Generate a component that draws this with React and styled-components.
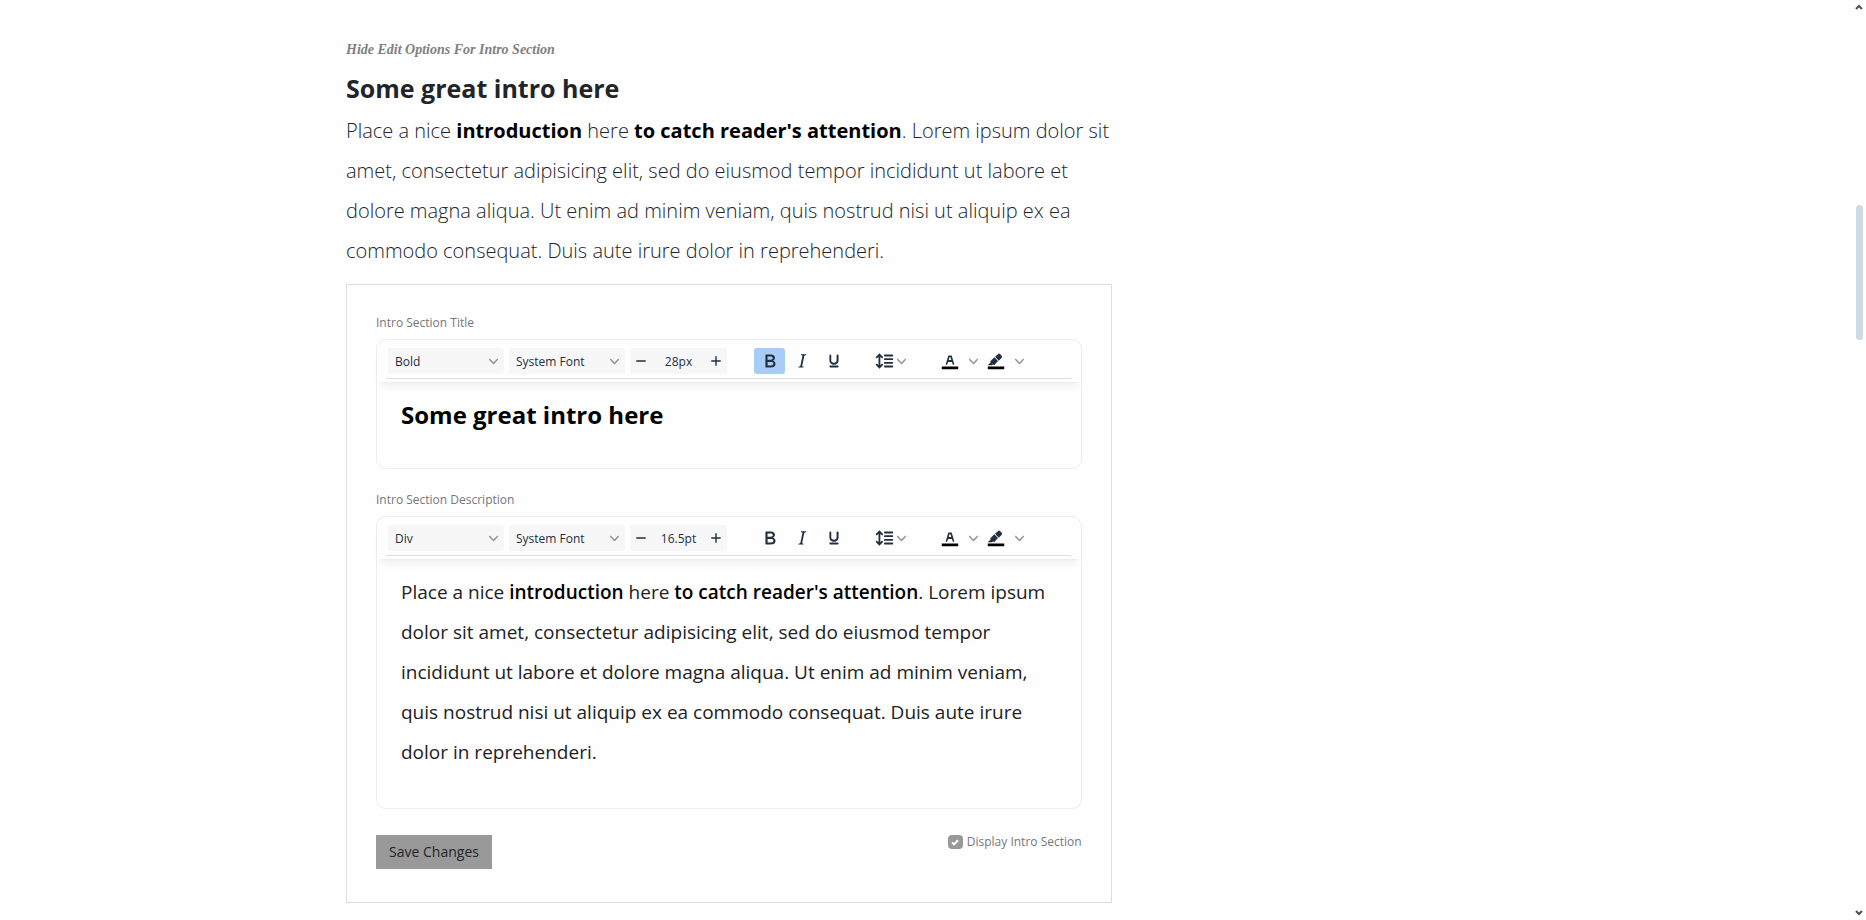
import React, { useState } from "react";
import styled, { createGlobalStyle, css } from "styled-components";

const GlobalStyle = createGlobalStyle`
  *, *::before, *::after { box-sizing: border-box; }
  body {
    margin: 0;
    background: #fefefe;
    color: #212529;
    font-family: "Open Sans", sans-serif;
  }
`;

const Shell = styled.div`
  display: flex;
  min-height: 100vh;
`;

const Page = styled.main`
  flex: 1;
  min-width: 0;
`;

const Container = styled.div`
  max-width: 1160px;
  margin: 0 auto;
`;

const Column = styled.section`
  width: 66%;
  padding: 39px 0 16px;
`;

const ToggleLink = styled.a`
  display: block;
  color: #808080;
  font: italic bold 14px/22px "Liberation Serif", serif;
  text-decoration: none;
`;

const Heading = styled.h2`
  margin: 10px 0 6px;
  font-size: 25px;
  font-weight: 700;
  line-height: 34px;
`;

const Intro = styled.p`
  margin: 0 0 13px;
  color: #212529;
  font-size: 20px;
  font-weight: 300;
  line-height: 40px;

  strong { color: #000; font-weight: 700; }
`;

const Panel = styled.form`
  padding: 29px 29px 33px;
  border: 1px solid #dddddd;
`;

const FieldLabel = styled.div`
  margin-bottom: 7px;
  color: #777777;
  font-size: 12px;
  line-height: 18px;
`;

const Editor = styled.div`
  margin-bottom: 22px;
  border: 1px solid #eeeeee;
  border-radius: 10px;
`;

const EditorHeader = styled.div`
  padding: 8px 10px 3px 9px;
  border-radius: 10px 10px 0 0;
  box-shadow: 0 2px 2px -2px rgba(34, 47, 62, 0.1), 0 8px 8px -4px rgba(34, 47, 62, 0.07);
`;

const Toolbar = styled.div`
  display: flex;
  align-items: center;
  padding: 0 0 4px 2px;
  border-bottom: 1px solid #dedede;
`;

const Group = styled.div`
  display: flex;
  align-items: center;
  gap: ${(p) => p.$gap || 0}px;
  margin-right: ${(p) => p.$after || 0}px;
`;

const controlText = css`
  color: #222f3e;
  font-family: "Open Sans", sans-serif;
  font-size: 12px;
`;

const SelectWrap = styled.label`
  display: flex;
  align-items: center;
  width: 116px;
  height: 26px;
  padding-right: 6px;
  border-radius: 3px;
  background: #f7f7f7;
`;

const Select = styled.select`
  ${controlText}
  flex: 1;
  min-width: 0;
  height: 26px;
  padding: 0 0 0 7px;
  border: 0;
  background: transparent;
  appearance: none;
`;

const Stepper = styled.div`
  display: flex;
  width: 97px;
  height: 26px;
  border-radius: 3px;
  background: #f7f7f7;
`;

const SizeInput = styled.input`
  ${controlText}
  flex: 1;
  min-width: 0;
  padding: 0;
  border: 0;
  background: transparent;
  text-align: center;
`;

const ToolButton = styled.button`
  display: flex;
  align-items: center;
  justify-content: center;
  gap: 2px;
  width: ${(p) => (p.$width ? `${p.$width}px` : "auto")};
  height: 26px;
  padding: 0;
  border: 0;
  border-radius: 3px;
  background: ${(p) => (p.$active ? "#a6ccf7" : "transparent")};
  color: #222f3e;
`;

const Chevron = styled.svg`
  flex: none;
  width: 9px;
  height: 9px;
  fill: #8b919a;
`;

const EditorBody = styled.div`
  color: ${(p) => (p.$title ? "#000" : "#222222")};
  outline: none;
  font-size: ${(p) => (p.$title ? 24 : 19)}px;
  font-weight: ${(p) => (p.$title ? 700 : 400)};
  line-height: ${(p) => (p.$title ? 32 : 40)}px;
  padding: ${(p) => (p.$title ? "17px 24px 37px" : "13px 24px 36px")};

  strong { color: #000; font-weight: 600; }
`;

const Footer = styled.div`
  display: flex;
  align-items: flex-start;
  justify-content: space-between;
  padding-top: 4px;
`;

const SaveButton = styled.button`
  min-width: 116px;
  height: 34px;
  padding: 0 11px;
  border: 0;
  background: #999999;
  color: #212529;
  font: 14px/20px "Open Sans", sans-serif;
`;

const CheckLabel = styled.label`
  display: flex;
  align-items: center;
  gap: 4px;
  color: #777777;
  font-size: 12px;
  line-height: 14px;
`;

const CheckBox = styled.span`
  display: grid;
  width: 15px;
  height: 14px;

  > * { grid-area: 1 / 1; }
  svg { pointer-events: none; place-self: center; opacity: ${(p) => (p.$on ? 1 : 0)}; }
`;

const CheckInput = styled.input`
  width: 15px;
  height: 14px;
  margin: 0;
  border-radius: 4px;
  background: #999999;
  appearance: none;
`;

const ScrollRail = styled.div`
  position: sticky;
  top: 0;
  display: flex;
  flex-direction: column;
  align-items: center;
  width: 14px;
  height: 100vh;
  padding: 4px 0;
`;

const RailSpace = styled.div`
  flex: ${(p) => p.$share};
`;

const RailThumb = styled.div`
  flex: 135;
  width: 7px;
  border-radius: 4px;
  background: #cfdbe4;
`;

const PATHS = {
  bold: "M7.8 19c-.3 0-.5 0-.6-.2l-.2-.5V5.7c0-.2 0-.4.2-.5l.6-.2h5c1.5 0 2.7.3 3.5 1 .7.6 1.1 1.4 1.1 2.5a3 3 0 0 1-.6 1.9c-.4.6-1 1-1.6 1.2.4.1.9.3 1.3.6s.8.7 1 1.2c.4.4.5 1 .5 1.6 0 1.3-.4 2.3-1.3 3-.8.7-2.1 1-3.8 1H7.8Zm5-8.3c.6 0 1.2-.1 1.6-.5.4-.3.6-.7.6-1.3 0-1.1-.8-1.7-2.3-1.7H9.3v3.5h3.4Zm.5 6c.7 0 1.3-.1 1.7-.4.4-.4.6-.9.6-1.5s-.2-1-.7-1.4c-.4-.3-1-.4-2-.4H9.4v3.8h4Z",
  italic: "m16.7 4.7-.1.9h-.3c-.6 0-1 0-1.4.3-.3.3-.4.6-.5 1.1l-2.1 9.8v.6c0 .5.4.8 1.4.8h.2l-.2.8H8l.2-.8h.2c1.1 0 1.8-.5 2-1.5l2-9.8.1-.5c0-.6-.4-.8-1.4-.8h-.3l.2-.9h5.8Z",
  underline: "M16 5c.6 0 1 .4 1 1v5.5a4 4 0 0 1-.4 1.8l-1 1.4a5.3 5.3 0 0 1-5.5 1 5 5 0 0 1-1.6-1c-.5-.4-.8-.9-1.1-1.4a4 4 0 0 1-.4-1.8V6c0-.6.4-1 1-1s1 .4 1 1v5.5c0 .3 0 .6.2 1l.6.7a3.3 3.3 0 0 0 2.2.8 3.4 3.4 0 0 0 2.2-.8c.3-.2.4-.5.4-.8l.2-.9V6c0-.6.4-1 1-1ZM8 17h8c.6 0 1 .4 1 1s-.4 1-1 1H8a1 1 0 0 1 0-2Z",
  lineHeight: "M21 5a1 1 0 0 1 .1 2H13a1 1 0 0 1-.1-2H21zm0 4a1 1 0 0 1 .1 2H13a1 1 0 0 1-.1-2H21zm0 4a1 1 0 0 1 .1 2H13a1 1 0 0 1-.1-2H21zm0 4a1 1 0 0 1 .1 2H13a1 1 0 0 1-.1-2H21zM7 3.6l3.7 3.7a1 1 0 0 1-1.3 1.5h-.1L8 7.3v9.2l1.3-1.3a1 1 0 0 1 1.3 0h.1c.4.4.4 1 0 1.3v.1L7 20.4l-3.7-3.7a1 1 0 0 1 1.3-1.5h.1L6 16.7V7.4L4.7 8.7a1 1 0 0 1-1.3 0h-.1a1 1 0 0 1 0-1.3v-.1L7 3.6z",
  textColor: "M8.7 16h-.8a.5.5 0 0 1-.5-.6l2.7-9c.1-.3.3-.4.5-.4h2.8c.2 0 .4.1.5.4l2.7 9a.5.5 0 0 1-.5.6h-.8a.5.5 0 0 1-.4-.4l-.7-2.2c0-.3-.3-.4-.5-.4h-3.4c-.2 0-.4.1-.5.4l-.7 2.2c0 .3-.2.4-.4.4Zm2.6-7.6-.6 2a.5.5 0 0 0 .5.6h1.6a.5.5 0 0 0 .5-.6l-.6-2c0-.3-.3-.4-.5-.4h-.4c-.2 0-.4.1-.5.4Z",
  highlight: "M7.7 16.7H3l3.3-3.3-.7-.8L10.2 8l4 4.1-4 4.2c-.2.2-.6.2-.8 0l-.6-.7-1.1 1.1zm5-7.5L11 7.4l3-2.9a2 2 0 0 1 2.6 0L18 6c.7.7.7 2 0 2.7l-2.9 2.9-1.8-1.8-.5-.6z",
};

const Icon = ({ name, bar }) => (
  <svg width="22" height="22" viewBox="0 0 24 24" fill="#222f3e" aria-hidden="true">
    <path d={PATHS[name]} fillRule="evenodd" />
    {bar && <path d="M3 18h18v3H3z" fill="#000" />}
  </svg>
);

const Down = () => (
  <Chevron viewBox="0 0 10 10" aria-hidden="true">
    <path d="M8.7 2.2c.3-.3.8-.3 1 0 .4.4.4.9 0 1.2L5.7 7.8c-.3.3-.9.3-1.2 0L.2 3.4a.8.8 0 0 1 0-1.2c.3-.3.8-.3 1.1 0L5 6l3.7-3.8Z" />
  </Chevron>
);

const StepIcon = ({ plus }) => (
  <svg width="10" height="10" viewBox="0 0 10 10" stroke="#222f3e" strokeWidth="1.4" strokeLinecap="round" aria-hidden="true">
    <path d={plus ? "M.8 5h8.4M5 .8v8.4" : "M.8 5h8.4"} />
  </svg>
);

const RailArrow = ({ up }) => (
  <svg width="8" height="6" viewBox="0 0 8 6" fill="none" stroke="#505050" strokeWidth="2" aria-hidden="true">
    <path d={up ? "M1 5l3-3 3 3" : "M1 1l3 3 3-3"} />
  </svg>
);

function RichEditor({ id, label, block, size, bold, title, children }) {
  return (
    <>
      <FieldLabel id={id}>{label}</FieldLabel>
      <Editor>
        <EditorHeader>
          <Toolbar role="toolbar" aria-labelledby={id}>
            <Group $gap={5} $after={27}>
              <SelectWrap>
                <Select aria-label="Block format" defaultValue={block}>
                  <option>{block}</option>
                </Select>
                <Down />
              </SelectWrap>
              <SelectWrap>
                <Select aria-label="Font family" defaultValue="System Font">
                  <option>System Font</option>
                </Select>
                <Down />
              </SelectWrap>
              <Stepper>
                <ToolButton type="button" $width={22} aria-label="Decrease font size"><StepIcon /></ToolButton>
                <SizeInput aria-label="Font size" defaultValue={size} />
                <ToolButton type="button" $width={22} aria-label="Increase font size"><StepIcon plus /></ToolButton>
              </Stepper>
            </Group>
            <Group $gap={1} $after={24}>
              <ToolButton type="button" $width={31} $active={bold} aria-label="Bold" aria-pressed={!!bold}><Icon name="bold" /></ToolButton>
              <ToolButton type="button" $width={31} aria-label="Italic"><Icon name="italic" /></ToolButton>
              <ToolButton type="button" $width={31} aria-label="Underline"><Icon name="underline" /></ToolButton>
            </Group>
            <Group $after={33}>
              <ToolButton type="button" aria-label="Line height"><Icon name="lineHeight" /><Down /></ToolButton>
            </Group>
            <Group>
              <ToolButton type="button" $width={22} aria-label="Text color"><Icon name="textColor" bar /></ToolButton>
              <ToolButton type="button" $width={24} aria-label="Text color menu"><Down /></ToolButton>
              <ToolButton type="button" $width={22} aria-label="Highlight color"><Icon name="highlight" bar /></ToolButton>
              <ToolButton type="button" $width={24} aria-label="Highlight color menu"><Down /></ToolButton>
            </Group>
          </Toolbar>
        </EditorHeader>
        <EditorBody $title={title} contentEditable suppressContentEditableWarning spellCheck={false} role="textbox" aria-labelledby={id}>
          {children}
        </EditorBody>
      </Editor>
    </>
  );
}

const Copy = () => (
  <>
    Place a nice <strong>introduction</strong> here <strong>to catch reader's attention</strong>. Lorem ipsum dolor sit
    amet, consectetur adipisicing elit, sed do eiusmod tempor incididunt ut labore et dolore magna aliqua. Ut enim ad
    minim veniam, quis nostrud nisi ut aliquip ex ea commodo consequat. Duis aute irure dolor in reprehenderi.
  </>
);

export default function App() {
  const [shown, setShown] = useState(true);
  return (
    <>
      <GlobalStyle />
      <Shell>
        <Page>
          <Container>
            <Column>
              <ToggleLink href="#edit">Hide Edit Options For Intro Section</ToggleLink>
              <Heading>Some great intro here</Heading>
              <Intro><Copy /></Intro>
              <Panel id="edit">
                <RichEditor id="intro-title" label="Intro Section Title" block="Bold" size="28px" bold title>
                  Some great intro here
                </RichEditor>
                <RichEditor id="intro-description" label="Intro Section Description" block="Div" size="16.5pt">
                  <Copy />
                </RichEditor>
                <Footer>
                  <SaveButton type="button">Save Changes</SaveButton>
                  <CheckLabel>
                    <CheckBox $on={shown}>
                      <CheckInput type="checkbox" checked={shown} onChange={(e) => setShown(e.target.checked)} />
                      <svg width="8" height="7" viewBox="0 0 8 7" fill="none" stroke="#fff" strokeWidth="2" aria-hidden="true">
                        <path d="M1 3.4l2 2L7 1.2" />
                      </svg>
                    </CheckBox>
                    Display Intro Section
                  </CheckLabel>
                </Footer>
              </Panel>
            </Column>
          </Container>
        </Page>
        <ScrollRail aria-hidden="true">
          <RailArrow up />
          <RailSpace $share={195} />
          <RailThumb />
          <RailSpace $share={570} />
          <RailArrow />
        </ScrollRail>
      </Shell>
    </>
  );
}
